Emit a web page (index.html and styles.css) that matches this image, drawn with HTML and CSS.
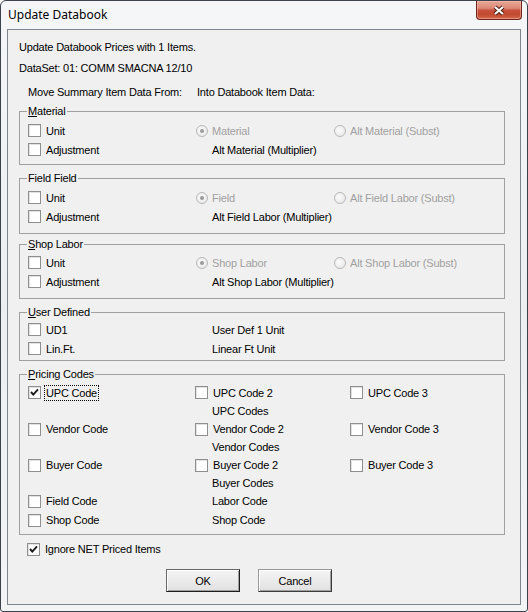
FILE: index.html
```html
<!DOCTYPE html>
<html>
<head>
    <title>Update Databook</title>
    <meta charset="UTF-8">
    <link rel="stylesheet" href="styles.css">
</head>
<body>
<div class="window">
    <div class="titlebar">
        <span class="title">Update Databook</span>
        <div class="close">
            <svg width="14" height="11" viewBox="0 0 14 11">
                <path d="M3 2 L11 9 M11 2 L3 9" stroke="#4a1c14" stroke-width="4.2" fill="none"/>
                <path d="M3 2 L11 9 M11 2 L3 9" stroke="#fff" stroke-width="2.2" fill="none"/>
            </svg>
        </div>
    </div>

    <div class="client">
        <div class="info">Update Databook Prices with 1 Items.</div>
        <div class="info dataset">DataSet: 01: COMM SMACNA 12/10</div>
        <div class="info heads">
            <span>Move Summary Item Data From:</span>
            <span>Into Databook Item Data:</span>
        </div>

        <fieldset class="group material">
            <legend><u>M</u>aterial</legend>
            <div class="row">
                <label class="check"><span class="box"></span>Unit</label>
                <label class="radio disabled"><span class="circle on"></span>Material</label>
                <label class="radio disabled"><span class="circle"></span>Alt Material (Subst)</label>
            </div>
            <div class="row">
                <label class="check"><span class="box"></span>Adjustment</label>
                <span class="text">Alt Material (Multiplier)</span>
            </div>
        </fieldset>

        <fieldset class="group field">
            <legend>Field Field</legend>
            <div class="row">
                <label class="check"><span class="box"></span>Unit</label>
                <label class="radio disabled"><span class="circle on"></span>Field</label>
                <label class="radio disabled"><span class="circle"></span>Alt Field Labor (Subst)</label>
            </div>
            <div class="row">
                <label class="check"><span class="box"></span>Adjustment</label>
                <span class="text">Alt Field Labor (Multiplier)</span>
            </div>
        </fieldset>

        <fieldset class="group shop">
            <legend><u>S</u>hop Labor</legend>
            <div class="row">
                <label class="check"><span class="box"></span>Unit</label>
                <label class="radio disabled"><span class="circle on"></span>Shop Labor</label>
                <label class="radio disabled"><span class="circle"></span>Alt Shop Labor (Subst)</label>
            </div>
            <div class="row">
                <label class="check"><span class="box"></span>Adjustment</label>
                <span class="text">Alt Shop Labor (Multiplier)</span>
            </div>
        </fieldset>

        <fieldset class="group user">
            <legend><u>U</u>ser Defined</legend>
            <div class="row">
                <label class="check"><span class="box"></span>UD1</label>
                <span class="text">User Def 1 Unit</span>
            </div>
            <div class="row">
                <label class="check"><span class="box"></span>Lin.Ft.</label>
                <span class="text">Linear Ft Unit</span>
            </div>
        </fieldset>

        <fieldset class="group pricing">
            <legend><u>P</u>ricing Codes</legend>
            <div class="row first">
                <label class="check">
                    <span class="box"><svg width="11" height="11" viewBox="0 0 11 11"><path d="M2 5 L4.3 7.6 L9 2.4" stroke="#1a1a1a" stroke-width="1.9" fill="none"/></svg></span>
                    <span class="focus">UPC Code</span>
                </label>
                <label class="check"><span class="box"></span>UPC Code 2</label>
                <label class="check"><span class="box"></span>UPC Code 3</label>
            </div>
            <div class="row"><span class="text">UPC Codes</span></div>
            <div class="row">
                <label class="check"><span class="box"></span>Vendor Code</label>
                <label class="check"><span class="box"></span>Vendor Code 2</label>
                <label class="check"><span class="box"></span>Vendor Code 3</label>
            </div>
            <div class="row"><span class="text">Vendor Codes</span></div>
            <div class="row">
                <label class="check"><span class="box"></span>Buyer Code</label>
                <label class="check"><span class="box"></span>Buyer Code 2</label>
                <label class="check"><span class="box"></span>Buyer Code 3</label>
            </div>
            <div class="row"><span class="text">Buyer Codes</span></div>
            <div class="row">
                <label class="check"><span class="box"></span>Field Code</label>
                <span class="text">Labor Code</span>
            </div>
            <div class="row last">
                <label class="check"><span class="box"></span>Shop Code</label>
                <span class="text">Shop Code</span>
            </div>
        </fieldset>

        <div class="row ignore">
            <label class="check">
                <span class="box"><svg width="11" height="11" viewBox="0 0 11 11"><path d="M2 5 L4.3 7.6 L9 2.4" stroke="#1a1a1a" stroke-width="1.9" fill="none"/></svg></span>
                Ignore NET Priced Items
            </label>
        </div>

        <div class="buttons">
            <button type="button" class="btn default">OK</button>
            <button type="button" class="btn">Cancel</button>
        </div>
    </div>
</div>
</body>
</html>
```

FILE: styles.css
```css
body {
    margin: 0;
    font-family: "Liberation Sans", Arial, sans-serif;
    font-size: 11px;
    letter-spacing: -0.2px;
    color: #000;
}
.window {
    width: 528px;
    height: 612px;
    box-sizing: border-box;
    border: 1px solid #3a434c;
    border-radius: 6px 6px 3px 3px;
    background: linear-gradient(180deg, #f4f6f8 0%, #eceff2 50%, #f2f4f6 100%);
    padding: 0 6px 6px;
    display: flex;
    flex-direction: column;
    overflow: hidden;
}
.titlebar {
    height: 28px;
    display: flex;
    justify-content: space-between;
    align-items: flex-start;
    flex: none;
}
.title {
    margin: 6px 0 0 1px;
    font-family: "Noto Sans", sans-serif;
    font-size: 12px;
    line-height: 16px;
    letter-spacing: 0;
    text-shadow: 0 0 6px #fff, 0 0 10px #fff;
}
.close {
    width: 46px;
    height: 19px;
    box-sizing: border-box;
    margin-right: -1px;
    border: 1px solid #6e2418;
    border-top: none;
    border-radius: 0 0 4px 4px;
    background: linear-gradient(180deg, #e8a797 0%, #dd8a76 40%, #c9503a 52%, #c24a30 75%, #d2694c 100%);
    box-shadow: inset 0 0 0 1px rgba(255, 200, 190, 0.45);
    display: flex;
    align-items: center;
    justify-content: center;
}
.close svg {
    display: block;
}
.client {
    flex: 1;
    box-sizing: border-box;
    border: 1px solid #7e8790;
    background: #f0f0f0;
    padding: 8px 15px 0 11px;
}
.info {
    line-height: 19px;
}
.dataset {
    margin-top: 2px;
}
.heads {
    margin-top: 5px;
    padding-left: 9px;
    display: grid;
    grid-template-columns: 169px auto;
}

/* group boxes */
.group {
    margin: 7px 0 0;
    padding: 3px 0 5px;
    border: 1px solid #a0a0a0;
}
.group legend {
    margin-left: 7px;
    padding: 0 1px;
    line-height: 13px;
}
.group.material {
    margin-top: 3px;
}
.group.field {
    padding-bottom: 7px;
}
.group.shop {
    margin-top: 4px;
    padding: 2px 0 7px;
}
.group.user {
    padding: 1px 0 2px;
}
.group.pricing {
    padding: 2px 0 4px;
}

.row {
    height: 19px;
    padding-left: 8px;
    display: grid;
    grid-template-columns: 167px 138px auto;
    align-items: center;
}
.pricing .row {
    height: 18px;
    grid-template-columns: 167px 155px auto;
}
.pricing .row.first {
    height: 19px;
}
.pricing .row.last {
    height: 20px;
}
.check,
.radio {
    display: flex;
    align-items: center;
    gap: 5px;
    white-space: nowrap;
}
.radio {
    gap: 4px;
    padding-left: 1px;
}
.disabled {
    color: #a0a0a0;
}
.box {
    width: 13px;
    height: 13px;
    box-sizing: border-box;
    border: 1px solid #8e8f8f;
    background: #fff;
    box-shadow: inset 1px 1px 0 #e2e2e2;
    display: flex;
    align-items: center;
    justify-content: center;
    flex: none;
}
.circle {
    width: 12px;
    height: 12px;
    box-sizing: border-box;
    border: 1px solid #b8b8b8;
    border-radius: 50%;
    background: radial-gradient(circle at 40% 40%, #fbfbfb, #e4e4e4);
    display: flex;
    align-items: center;
    justify-content: center;
    flex: none;
}
.circle.on::after {
    content: "";
    width: 4px;
    height: 4px;
    border-radius: 50%;
    background: #9a9a9a;
}
.text {
    grid-column: 2;
    padding-left: 17px;
    white-space: nowrap;
}
.focus {
    outline: 1px dotted #000;
    outline-offset: 1px;
}
.ignore {
    margin-top: 5px;
    height: 18px;
}
.buttons {
    margin-top: 11px;
    padding-left: 147px;
    display: flex;
    gap: 18px;
}
.btn {
    width: 74px;
    height: 23px;
    box-sizing: border-box;
    font-family: "Liberation Sans", Arial, sans-serif;
    font-size: 11px;
    letter-spacing: -0.2px;
    color: #000;
    background: linear-gradient(180deg, #f4f4f4 0%, #ebebeb 50%, #e1e1e1 100%);
    border: 1px solid;
    border-color: #9a9a9a #3c3c3c #3c3c3c #9a9a9a;
    box-shadow: inset 1px 1px 0 #fff, inset -1px -1px 0 #a0a0a0;
    padding: 0;
}
.btn.default {
    border-color: #6a6a6a #1e1e1e #1e1e1e #6a6a6a;
}
```
